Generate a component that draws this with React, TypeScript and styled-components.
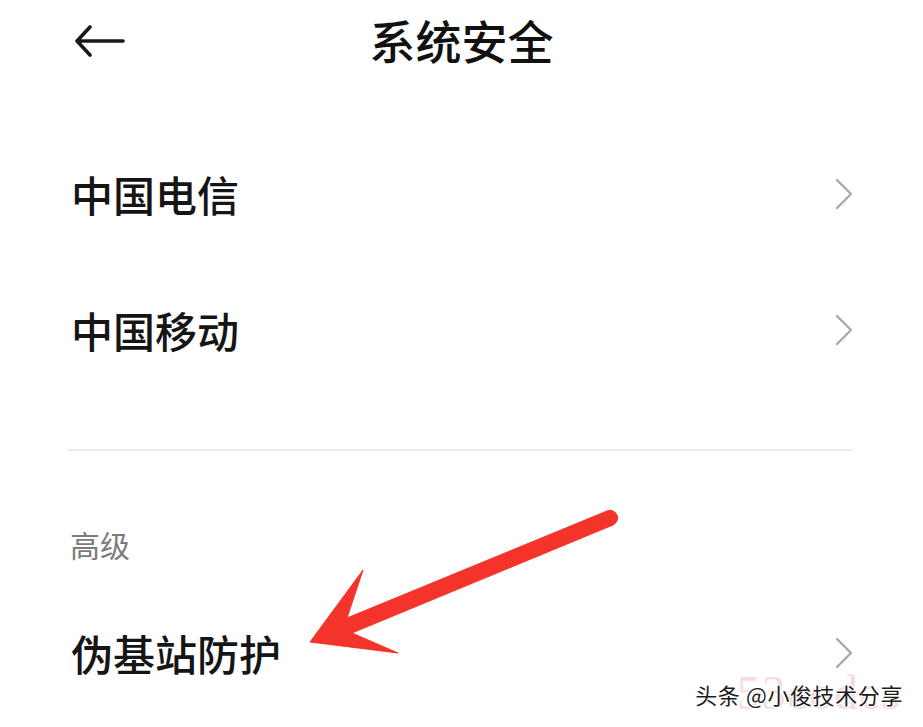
import styled, { createGlobalStyle } from "styled-components";

const GlobalStyle = createGlobalStyle`
  html, body {
    margin: 0;
    padding: 0;
    background: #ffffff;
  }
  body {
    font-family: "Noto Sans CJK SC", "Noto Sans", sans-serif;
    color: #1a1a1a;
  }
`;

const Screen = styled.div`
  position: relative;
  width: 923px;
  height: 727px;
  overflow: hidden;
  background: #ffffff;
`;

const Header = styled.div`
  display: grid;
  grid-template-columns: 1fr auto 1fr;
  align-items: center;
  height: 78px;
  padding: 0 75px;
`;

const BackButton = styled.div`
  display: flex;
  align-items: center;
  height: 32px;
  margin-top: 3px;
`;

const Title = styled.h1`
  margin: 0;
  font-size: 46px;
  font-weight: 500;
  line-height: 1;
  color: #111111;
`;

const List = styled.div`
  display: flex;
  flex-direction: column;
  margin-top: 48px;
`;

const Row = styled.div`
  display: flex;
  align-items: center;
  justify-content: space-between;
  height: 136px;
  padding: 0 70px 0 71px;
`;

const RowLabel = styled.span`
  font-size: 42px;
  font-weight: 500;
  line-height: 1;
  color: #151515;
`;

const Divider = styled.div`
  height: 2px;
  margin: 51px 70px 0 68px;
  background: #ececec;
`;

const SectionLabel = styled.div`
  margin-top: 73px;
  padding-left: 70px;
  font-size: 30px;
  line-height: 40px;
  color: #7c7c7c;
`;

const SectionList = styled.div`
  display: flex;
  flex-direction: column;
  margin-top: 21px;
`;

const Annotation = styled.svg`
  position: absolute;
  left: 0;
  top: 0;
  pointer-events: none;
`;

const Watermark = styled.div`
  position: absolute;
  right: 20px;
  bottom: 22px;
  font-size: 22px;
  letter-spacing: 0.6px;
  line-height: 1;
  color: #1d1d1d;
  text-shadow: 1px 1px 0 #fff, -1px -1px 0 #fff, 1px -1px 0 #fff, -1px 1px 0 #fff;
`;

const FaintMark = styled.div`
  position: absolute;
  right: 22px;
  bottom: 10px;
  font-family: "Liberation Serif", serif;
  font-size: 48px;
  line-height: 1;
  color: rgba(240, 150, 160, 0.35);
  letter-spacing: 1px;
`;

function Chevron() {
  return (
    <svg width="18" height="32" viewBox="0 0 18 32">
      <path
        d="M2 2 L16 16 L2 30"
        fill="none"
        stroke="#a8a8a8"
        strokeWidth="2.4"
        strokeLinecap="round"
        strokeLinejoin="round"
      />
    </svg>
  );
}

function BackArrow() {
  return (
    <svg width="50" height="32" viewBox="0 0 50 32">
      <path
        d="M48 16 H3 M15 2 L2 16 L15 30"
        fill="none"
        stroke="#1a1a1a"
        strokeWidth="3.6"
        strokeLinecap="round"
        strokeLinejoin="round"
      />
    </svg>
  );
}

const rows = ["中国电信", "中国移动"];

export default function App() {
  return (
    <Screen>
      <GlobalStyle />
      <Header>
        <BackButton>
          <BackArrow />
        </BackButton>
        <Title>系统安全</Title>
        <span />
      </Header>
      <List>
        {rows.map((r) => (
          <Row key={r}>
            <RowLabel>{r}</RowLabel>
            <Chevron />
          </Row>
        ))}
      </List>
      <Divider />
      <SectionLabel>高级</SectionLabel>
      <SectionList>
        <Row>
          <RowLabel>伪基站防护</RowLabel>
          <Chevron />
        </Row>
      </SectionList>

      <Annotation width="923" height="727" viewBox="0 0 923 727">
        <path
          d="M607 511 L347 618 L363 570 L310 642 L398 653 L352 633 L613 525 A7 7 0 0 0 607 511 Z"
          fill="#f4342b"
          stroke="#f4342b"
          strokeWidth="1"
          strokeLinejoin="round"
        />
      </Annotation>
      <FaintMark>53codes</FaintMark>
      <Watermark>头条 @小俊技术分享</Watermark>
    </Screen>
  );
}
